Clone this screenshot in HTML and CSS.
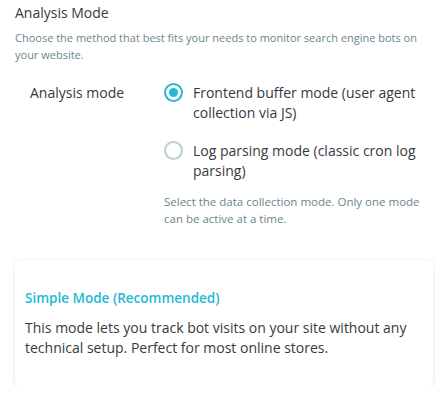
FILE: index.html
```html
<!DOCTYPE html>
<html>
<head>
<meta charset="utf-8">
<link rel="stylesheet" href="styles.css">
</head>
<body>
<div class="page">
  <h3 class="title">Analysis Mode</h3>
  <p class="desc">Choose the method that best fits your needs to monitor search engine bots on your website.</p>
  <div class="form-row">
    <div class="label">Analysis mode</div>
    <div class="field">
      <label class="radio">
        <span class="dot checked"></span>
        <span class="radio-text">Frontend buffer mode (user agent collection via JS)</span>
      </label>
      <label class="radio">
        <span class="dot"></span>
        <span class="radio-text">Log parsing mode (classic cron log parsing)</span>
      </label>
      <p class="help">Select the data collection mode. Only one mode can be active at a time.</p>
    </div>
  </div>
  <div class="card">
    <h4 class="card-title">Simple Mode (Recommended)</h4>
    <p class="card-text">This mode lets you track bot visits on your site without any technical setup. Perfect for most online stores.</p>
  </div>
</div>
</body>
</html>
```
FILE: styles.css
```css
* { box-sizing: border-box; }
html, body { margin: 0; background: #fff; }
body { font-family: "Open Sans", "Noto Sans", sans-serif; color: #363a41; }
.page { padding: 3px 15px 0 15px; }
.title { margin: 0; font-size: 14px; font-weight: 400; line-height: 20px; color: #363a41; }
.desc { margin: 6px 0 0; font-size: 11px; line-height: 17px; color: #6c868e; }
.form-row { display: flex; margin-top: 20px; }
.label { width: 149px; padding-left: 15px; font-size: 14px; line-height: 20px; }
.field { flex: 1; }
.radio { display: flex; align-items: flex-start; font-size: 14px; line-height: 20px; margin-bottom: 18px; }
.dot { flex: none; width: 19px; height: 19px; border-radius: 50%; border: 2px solid #b7ced3; margin: 0 10px 0 0; position: relative; top: 0; }
.dot.checked { border-color: #25b9d7; }
.dot.checked::after { content: ""; position: absolute; left: 3px; top: 3px; width: 9px; height: 9px; border-radius: 50%; background: #25b9d7; }
.radio-text { flex: 1; }
.help { margin: -6px 0 0; font-size: 11.5px; line-height: 17px; color: #6c868e; }
.card { margin-top: 33px; width: 418px; border-radius: 5px; box-shadow: 0 1px 4px rgba(0,0,0,0.11); padding: 28px 10px 28px 10px; }
.card-title { margin: 0; font-size: 13.5px; font-weight: 600; color: #25b9d7; line-height: 20px; }
.card-text { margin: 10px 0 0; font-size: 14px; line-height: 20px; color: #363a41; }
```
